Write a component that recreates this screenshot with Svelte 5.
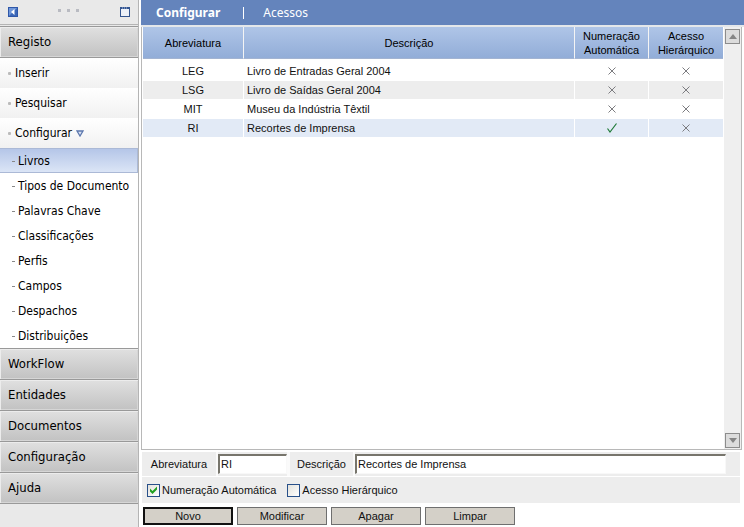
<script>
  const items = ['Inserir', 'Pesquisar'];
  const subItems = [
    'Livros',
    'Tipos de Documento',
    'Palavras Chave',
    'Classificações',
    'Perfis',
    'Campos',
    'Despachos',
    'Distribuições'
  ];
  const sections = ['WorkFlow', 'Entidades', 'Documentos', 'Configuração', 'Ajuda'];
  const books = [
    { code: 'LEG', name: 'Livro de Entradas Geral 2004', auto: false, tree: false },
    { code: 'LSG', name: 'Livro de Saídas Geral 2004', auto: false, tree: false },
    { code: 'MIT', name: 'Museu da Indústria Têxtil', auto: false, tree: false },
    { code: 'RI', name: 'Recortes de Imprensa', auto: true, tree: false }
  ];
  let selected = $state('RI');
  let code = $state('RI');
  let name = $state('Recortes de Imprensa');
  let auto = $state(true);
  let tree = $state(false);

  function pick(book) {
    selected = book.code;
    code = book.code;
    name = book.name;
    auto = book.auto;
    tree = book.tree;
  }
</script>

{#snippet mark(on)}
  {#if on}
    <svg class="mark" width="10" height="10" viewBox="0 0 10 10" role="img" aria-label="Sim">
      <path d="M0.5 5.5L3 9L9.5 0.5" fill="none" stroke="#1f7a38" stroke-width="1.2" />
    </svg>
  {:else}
    <svg class="mark" width="10" height="10" viewBox="0 0 10 10" role="img" aria-label="Não">
      <path d="M1.5 1.5L8.5 8.5M8.5 1.5L1.5 8.5" fill="none" stroke="#7c7c80" stroke-width="1" />
    </svg>
  {/if}
{/snippet}

<div class="app">
  <nav class="side">
    <div class="tools">
      <button class="tool" aria-label="Recolher menu">
        <svg width="10" height="10" viewBox="0 0 10 10">
          <rect width="10" height="10" fill="#2f57a8" />
          <rect x="1" y="1" width="8" height="8" fill="#6f97da" />
          <path d="M1 9H9V1Z" fill="#3c68b8" />
          <path d="M6.5 2V8L3 5Z" fill="#fff" />
        </svg>
      </button>
      <svg width="22" height="6" viewBox="0 0 22 6" aria-hidden="true">
        <path d="M0 0H3V3H0ZM9 0H12V3H9ZM18 0H21V3H18Z" fill="#b9bbc2" />
      </svg>
      <button class="tool" aria-label="Maximizar">
        <svg width="10" height="10" viewBox="0 0 10 10">
          <rect x="0.5" y="0.5" width="9" height="9" fill="#edf1f8" stroke="#34558f" />
          <path d="M0 1H10" stroke="#34558f" stroke-width="2" />
          <path d="M2 1H3M4 1H5M6 1H7" stroke="#a9bde0" stroke-width="1" />
        </svg>
      </button>
    </div>
    <a class="section first" href="#registo">Registo</a>
    {#each items as item}
      <a class="item" href="#{item}"><i></i>{item}</a>
    {/each}
    <a class="item" href="#configurar"><i></i>Configurar
      <svg class="open" width="8" height="7" viewBox="0 0 8 7" aria-hidden="true">
        <path d="M1 1H7L4 6Z" fill="#dce4f2" stroke="#5a76ad" stroke-width="1.3" />
      </svg>
    </a>
    {#each subItems as sub, i}
      <a class="sub" class:current={i === 0} href="#{sub}"><i></i>{sub}</a>
    {/each}
    {#each sections as section}
      <a class="section" href="#{section}">{section}</a>
    {/each}
  </nav>

  <main>
    <header>
      <a class="on" href="#configurar">Configurar</a>
      <span class="bar"></span>
      <a href="#acessos">Acessos</a>
    </header>

    <div class="list">
      <div class="grid">
        <table>
          <thead>
            <tr>
              <th class="code">Abreviatura</th>
              <th>Descrição</th>
              <th class="flag">Numeração Automática</th>
              <th class="flag">Acesso Hierárquico</th>
            </tr>
          </thead>
          <tbody>
            {#each books as book}
              <tr class:selected={selected === book.code} onclick={() => pick(book)}>
                <td>{book.code}</td>
                <td class="name">{book.name}</td>
                <td>{@render mark(book.auto)}</td>
                <td>{@render mark(book.tree)}</td>
              </tr>
            {/each}
          </tbody>
        </table>
      </div>
      <div class="scroll">
        <button aria-label="Subir">
          <svg width="8" height="5" viewBox="0 0 8 5"><path d="M0 5L4 0L8 5Z" fill="#858585" /></svg>
        </button>
        <button aria-label="Descer">
          <svg width="8" height="5" viewBox="0 0 8 5"><path d="M0 0L4 5L8 0Z" fill="#858585" /></svg>
        </button>
      </div>
    </div>

    <form onsubmit={(e) => e.preventDefault()}>
      <div class="fields">
        <label class="short" for="code">Abreviatura</label>
        <input class="code-box" id="code" type="text" bind:value={code} />
        <label class="long" for="name">Descrição</label>
        <input class="name-box" id="name" type="text" bind:value={name} />
      </div>
      <div class="checks">
        <label><input type="checkbox" bind:checked={auto} />Numeração Automática</label>
        <label><input type="checkbox" bind:checked={tree} />Acesso Hierárquico</label>
      </div>
      <div class="actions">
        <button class="default" type="submit">Novo</button>
        <button type="button">Modificar</button>
        <button type="button">Apagar</button>
        <button type="button">Limpar</button>
      </div>
    </form>
  </main>
</div>

<style>
  :global(body) {
    background: #fff;
  }
  .app {
    display: flex;
    gap: 2px;
    min-height: 100vh;
    font-family: 'Liberation Sans', Arial, sans-serif;
    font-size: 11px;
    line-height: 14px;
    color: #111;
  }
  a {
    color: inherit;
    text-decoration: none;
  }
  button {
    margin: 0;
    padding: 0;
    font: inherit;
    color: inherit;
  }
  svg {
    display: block;
  }

  .side {
    flex: none;
    box-sizing: border-box;
    width: 139px;
    border-right: 1px solid #b4b4b4;
    background: #e9e9e9;
    font-family: 'DejaVu Sans Condensed', Tahoma, sans-serif;
    font-size: 12px;
    color: #000;
  }
  .tools {
    display: flex;
    align-items: center;
    justify-content: space-between;
    box-sizing: border-box;
    height: 25px;
    margin-bottom: 1px;
    padding: 0 8px;
    border-bottom: 1px solid #b4b4b4;
  }
  .tool {
    border: 0;
    background: none;
  }
  .section {
    display: flex;
    align-items: center;
    box-sizing: border-box;
    height: 31px;
    padding-left: 8px;
    border-top: 1px solid #999;
    box-shadow: inset 1px 1px #ececec, inset -1px -1px #d6d6d6;
    background: linear-gradient(#e0e0e0, #c2c2c2);
    font-size: 13px;
  }
  .section.first {
    height: 32px;
    border-bottom: 1px solid #999;
  }
  .section:last-child {
    height: 32px;
    border-bottom: 1px solid #999;
  }
  .item {
    display: flex;
    align-items: center;
    height: 30px;
    padding-left: 8px;
    background: linear-gradient(#fff, #f1f1f1);
  }
  .item i {
    width: 3px;
    height: 3px;
    margin-right: 4px;
    border-radius: 1px;
    background: #bbb;
  }
  .open {
    margin-left: 4px;
  }
  .sub {
    display: flex;
    align-items: center;
    box-sizing: border-box;
    height: 25px;
    padding-left: 12px;
    background: #fff;
    white-space: nowrap;
  }
  .sub i {
    width: 3px;
    height: 1px;
    margin: 2px 3px 0 0;
    background: #888;
  }
  .sub.current {
    border: 1px solid #abb9d6;
    border-left: 0;
    background: linear-gradient(#b5c6e8, #dbe5f6);
  }

  main {
    display: flex;
    flex: 1;
    flex-direction: column;
    min-width: 0;
  }
  header {
    display: flex;
    align-items: center;
    height: 25px;
    padding-left: 15px;
    border-bottom: 2px solid #e4e7ea;
    background: #6484bc;
    color: #fff;
    font-family: 'Noto Sans', Tahoma, sans-serif;
    font-size: 12px;
  }
  header .on {
    font-weight: bold;
  }
  .bar {
    width: 1px;
    height: 12px;
    margin: 0 19px 0 23px;
    background: #fff;
  }

  .list {
    display: flex;
    flex: 1;
    margin-right: 2px;
    border: solid #b8b8b8;
    border-width: 0 1px 1px;
  }
  .grid {
    flex: 1;
    padding: 0 1px;
  }
  table {
    width: 100%;
    table-layout: fixed;
    border-collapse: separate;
    border-spacing: 0;
  }
  th {
    box-sizing: border-box;
    height: 32px;
    padding: 0;
    border-right: 1px solid #f4f4f4;
    border-bottom: 1px solid #a3b4d2;
    background: linear-gradient(#afc5e7, #92add8);
    font-weight: normal;
    color: #000;
  }
  .code {
    width: 101px;
  }
  .flag {
    width: 74px;
  }
  th:last-child,
  td:last-child {
    border-right: 0;
  }
  thead::after {
    content: '';
    display: table-row;
    height: 3px;
  }
  td {
    height: 18px;
    padding: 0;
    border-right: 1px solid #fff;
    border-bottom: 1px solid #fff;
    text-align: center;
  }
  .name {
    padding-left: 3px;
    text-align: left;
  }
  tbody tr:nth-child(even) td {
    background: #ededed;
  }
  tbody tr.selected td {
    background: #e2eaf6;
  }
  .mark {
    margin: 0 auto;
  }
  .scroll {
    display: flex;
    flex: none;
    flex-direction: column;
    justify-content: space-between;
    align-items: center;
    width: 17px;
    padding: 2px 0 1px;
    background: #efefef;
  }
  .scroll button {
    display: grid;
    place-items: center;
    box-sizing: border-box;
    width: 15px;
    height: 15px;
    border: 1px solid #8c8c8c;
    background: #dcdcdc;
  }

  .fields {
    display: flex;
    align-items: center;
    height: 24px;
    margin: 2px 4px 0 1px;
    background: #ededed;
  }
  .fields label {
    box-sizing: border-box;
    height: 24px;
    border-right: 2px solid #fafafa;
    line-height: 24px;
    text-align: center;
  }
  .short {
    width: 76px;
  }
  .long {
    width: 68px;
    border-left: 3px solid #fafafa;
  }
  .fields input {
    box-sizing: border-box;
    height: 20px;
    padding: 0 1px 1px;
    border: 1px solid #f8f8f8;
    border-top: 2px solid #77756c;
    border-left: 2px solid #77756c;
    background: #fff;
    font: inherit;
    color: inherit;
  }
  .code-box {
    width: 69px;
  }
  .name-box {
    flex: 1;
    min-width: 0;
    margin-right: 14px;
  }
  .checks {
    display: flex;
    align-items: center;
    gap: 11px;
    height: 26px;
    margin: 1px 4px 0 1px;
    padding-left: 5px;
    background: #ededed;
  }
  .checks label {
    display: flex;
    align-items: center;
    gap: 2px;
  }
  .checks input {
    appearance: none;
    box-sizing: border-box;
    width: 13px;
    height: 13px;
    margin: 0;
    border: 1px solid #28508a;
    background: linear-gradient(135deg, #e3e2dc, #fff);
  }
  .checks input:checked {
    background: url("data:image/svg+xml,%3Csvg xmlns='http://www.w3.org/2000/svg' viewBox='0 0 11 11'%3E%3Cpath d='M2 3.5L4.5 6L9 1.5V4.5L4.5 9L2 6.5Z' fill='%2321a121'/%3E%3C/svg%3E"), linear-gradient(135deg, #e3e2dc, #fff);
  }
  .actions {
    display: flex;
    gap: 4px;
    padding: 4px 2px 2px;
  }
  .actions button {
    box-sizing: border-box;
    width: 90px;
    height: 18px;
    border: 1px solid #6f6f6f;
    background: #d4d0c8;
  }
  .actions .default {
    border: 2px solid #111;
  }
</style>
